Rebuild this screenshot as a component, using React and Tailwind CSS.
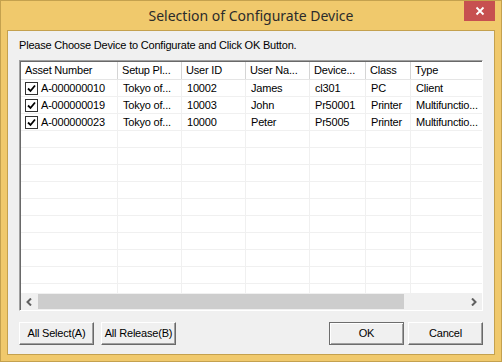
import React from 'react';

const columns = [
  { key: 'asset', label: 'Asset Number', w: 'w-[97px]' },
  { key: 'setup', label: 'Setup Pl...', w: 'w-[64px]' },
  { key: 'userId', label: 'User ID', w: 'w-[64px]' },
  { key: 'userName', label: 'User Na...', w: 'w-[64px]' },
  { key: 'device', label: 'Device...', w: 'w-[56px]' },
  { key: 'cls', label: 'Class', w: 'w-[45px]' },
  { key: 'type', label: 'Type', w: 'w-[90px]' },
];

const rows = [
  { asset: 'A-000000010', setup: 'Tokyo of...', userId: '10002', userName: 'James', device: 'cl301', cls: 'PC', type: 'Client' },
  { asset: 'A-000000019', setup: 'Tokyo of...', userId: '10003', userName: 'John', device: 'Pr50001', cls: 'Printer', type: 'Multifunctio...' },
  { asset: 'A-000000023', setup: 'Tokyo of...', userId: '10000', userName: 'Peter', device: 'Pr5005', cls: 'Printer', type: 'Multifunctio...' },
];

const Check = () => (
  <span className="w-[13px] h-[13px] border border-[#333] bg-white flex items-center justify-center shrink-0">
    <svg width="9" height="9" viewBox="0 0 9 9">
      <path d="M1 4.5 L3.5 7 L8 1.5" stroke="#000" strokeWidth="1.8" fill="none" />
    </svg>
  </span>
);

const Btn = ({ children, primary }) => (
  <button
    type="button"
    className={
      'h-[23px] w-[75px] bg-[#f0f0f0] text-[11px] text-black leading-none ' +
      (primary
        ? 'border border-[#6d6d6d] shadow-[inset_1px_1px_0_#fff,inset_-1px_-1px_0_#a0a0a0]'
        : 'border-t border-l border-r border-b border-t-white border-l-white border-r-[#696969] border-b-[#696969] shadow-[inset_-1px_-1px_0_#a0a0a0]')
    }
  >
    {children}
  </button>
);

export default function App() {
  const empty = Array.from({ length: 10 });
  return (
    <div
      className="w-[502px] h-[362px] bg-[#f0c96c] border border-[#c4a14e] flex flex-col relative"
      style={{ fontFamily: '"Liberation Sans", Arial, sans-serif' }}
    >
      {/* title bar */}
      <div className="h-[29px] flex items-center justify-center">
        <span
          className="text-[14px] text-[#2b2b2b] pb-[1px]"
          style={{ fontFamily: '"Noto Sans", "Open Sans", sans-serif' }}
        >
          Selection of Configurate Device
        </span>
      </div>
      <div className="absolute top-0 right-[6px] w-[31px] h-[20px] bg-[#c75050] flex items-center justify-center">
        <svg width="10" height="10" viewBox="0 0 10 10">
          <path d="M1.5 1.5 L8.5 8.5 M8.5 1.5 L1.5 8.5" stroke="#fff" strokeWidth="1.8" />
        </svg>
      </div>

      {/* client area */}
      <div className="mx-[6px] border border-[#c4a14e] bg-[#f0f0f0] flex-1 mb-[6px] flex flex-col px-[11px] pt-[8px] pb-[9px] text-[11px] tracking-[-0.2px] text-black">
        <div className="leading-[13px]">Please Choose Device to Configurate and Click OK Button.</div>

        {/* list view */}
        <div className="mt-[8px] h-[251px] border-t border-l border-r border-b border-t-[#a0a0a0] border-l-[#a0a0a0] border-r-white border-b-white">
          <div className="h-full border-t border-l border-t-[#696969] border-l-[#696969] bg-white flex flex-col overflow-hidden">
            {/* header */}
            <div className="flex h-[18px] shrink-0 bg-white border-b border-[#e5e5e5]">
              {columns.map((c) => (
                <div
                  key={c.key}
                  className={c.w + ' shrink-0 border-r border-[#d5d5d5] px-[4px] flex items-center leading-none'}
                >
                  {c.label}
                </div>
              ))}
            </div>
            {/* body */}
            <div className="flex-1 overflow-hidden">
              {rows.map((r, i) => (
                <div key={i} className="flex h-[17px] border-b border-[#f0f0f0]">
                  {columns.map((c, j) => (
                    <div
                      key={c.key}
                      className={c.w + ' shrink-0 border-r border-[#f0f0f0] flex items-center gap-[3px] leading-none ' + (j === 0 ? 'pl-[4px]' : 'px-[5px]')}
                    >
                      {j === 0 && <Check />}
                      <span className="whitespace-nowrap">{r[c.key]}</span>
                    </div>
                  ))}
                </div>
              ))}
              {empty.map((_, i) => (
                <div key={i} className="flex h-[17px] border-b border-[#f0f0f0]">
                  {columns.map((c) => (
                    <div key={c.key} className={c.w + ' shrink-0 border-r border-[#f0f0f0]'} />
                  ))}
                </div>
              ))}
            </div>
            {/* horizontal scrollbar */}
            <div className="h-[17px] shrink-0 flex bg-[#f0f0f0]">
              <div className="w-[17px] flex items-center justify-center">
                <svg width="7" height="8" viewBox="0 0 7 8">
                  <path d="M5 0.5 L1.5 4 L5 7.5" stroke="#606060" strokeWidth="2" fill="none" />
                </svg>
              </div>
              <div className="w-[366px] bg-[#cdcdcd] my-[1px]" />
              <div className="flex-1" />
              <div className="w-[17px] flex items-center justify-center">
                <svg width="7" height="8" viewBox="0 0 7 8">
                  <path d="M2 0.5 L5.5 4 L2 7.5" stroke="#606060" strokeWidth="2" fill="none" />
                </svg>
              </div>
            </div>
          </div>
        </div>

        {/* buttons */}
        <div className="mt-[11px] flex items-center">
          <Btn>All Select(A)</Btn>
          <div className="ml-[7px]">
            <Btn>All Release(B)</Btn>
          </div>
          <div className="ml-auto flex gap-[4px]">
            <Btn primary>OK</Btn>
            <Btn>Cancel</Btn>
          </div>
        </div>
      </div>
    </div>
  );
}
